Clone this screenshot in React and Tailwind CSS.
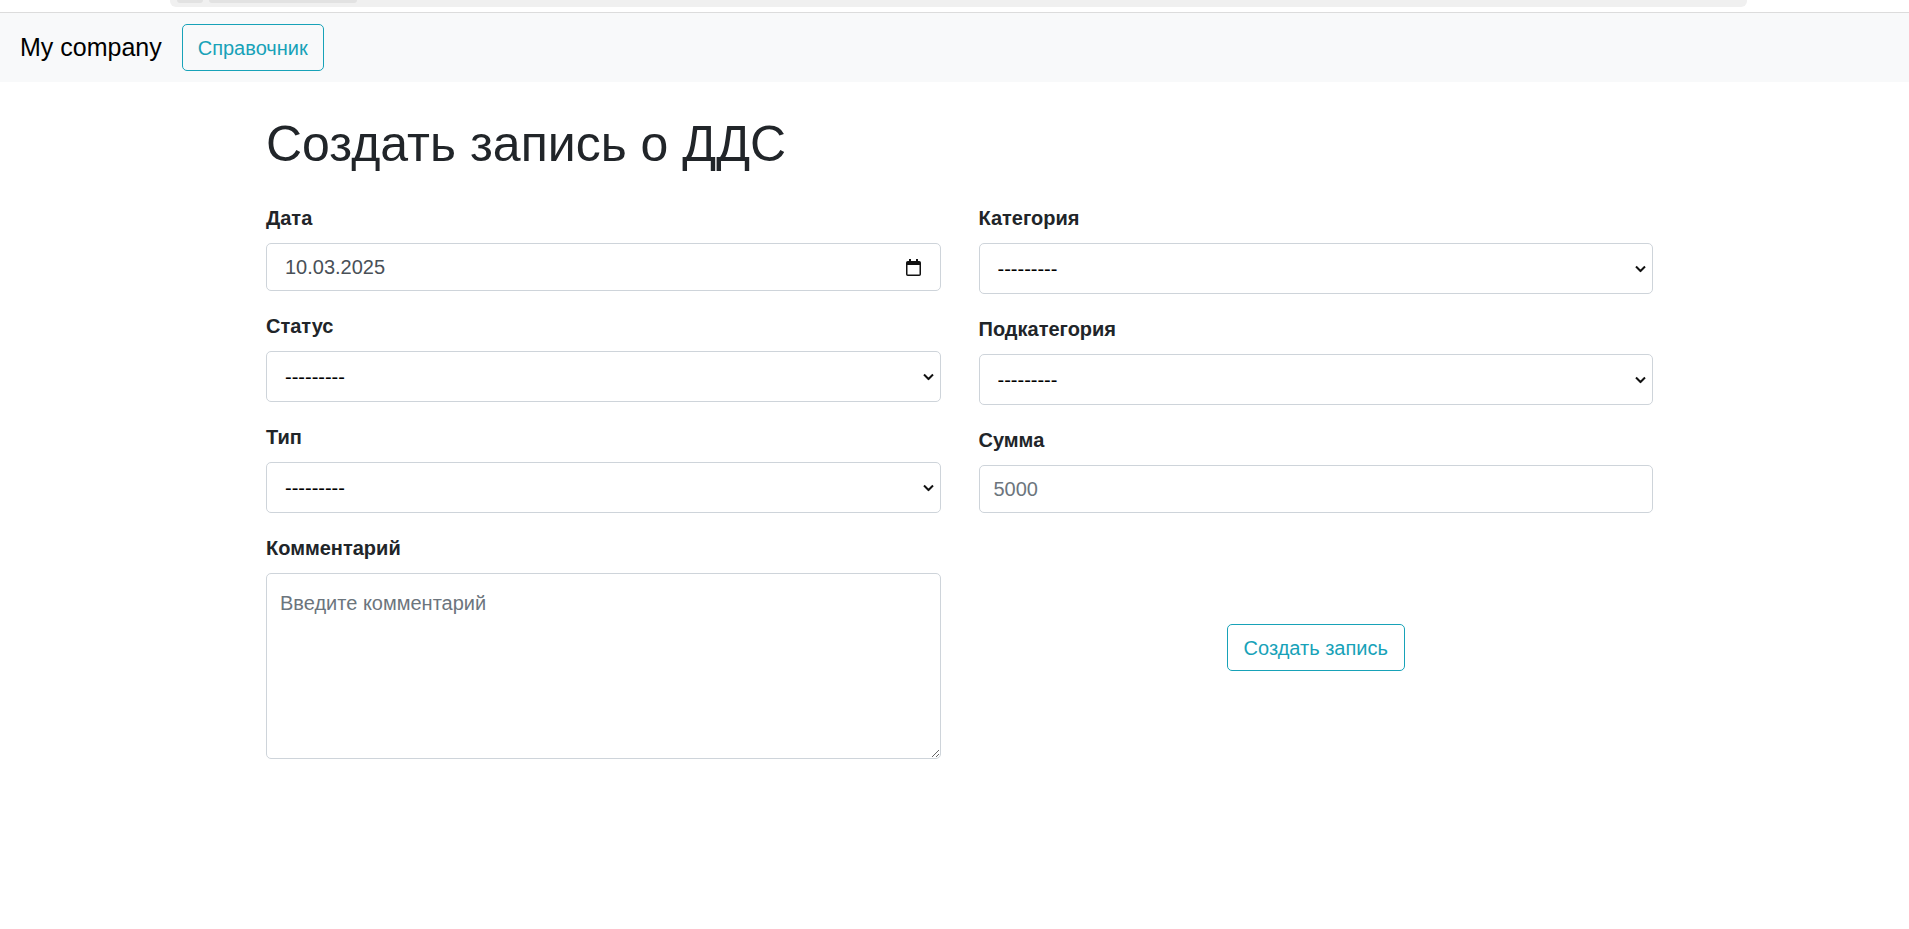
import React from "react";

const font = { fontFamily: '"Liberation Sans", Arial, sans-serif' };

function Chevron() {
  return (
    <svg width="11" height="7" viewBox="0 0 11 7" className="absolute right-[7px] top-1/2 -translate-y-1/2 pointer-events-none">
      <polyline points="1,1 5.5,5.5 10,1" fill="none" stroke="#111" strokeWidth="2" />
    </svg>
  );
}

function CalendarIcon() {
  return (
    <svg width="15" height="17" viewBox="0 0 15 17">
      <rect x="3" y="0" width="2" height="3" fill="#111" />
      <rect x="10" y="0" width="2" height="3" fill="#111" />
      <rect x="0.75" y="2.75" width="13.5" height="13.5" rx="1" fill="none" stroke="#111" strokeWidth="1.5" />
      <rect x="1" y="3" width="13" height="3" fill="#111" />
    </svg>
  );
}

function Field({ label, children }) {
  return (
    <div className="mb-[20px]">
      <label className="block mb-[10px] text-[20px] leading-[30px] font-bold text-[#212529]">{label}</label>
      {children}
    </div>
  );
}

function Select() {
  return (
    <div className="relative">
      <select className="w-full h-[51px] appearance-none bg-white border border-[#ced4da] rounded-[5px] pl-[18px] pr-8 text-[20px] text-black outline-none">
        <option>---------</option>
      </select>
      <Chevron />
    </div>
  );
}

export default function App() {
  return (
    <div className="min-h-screen bg-white" style={font}>
      {/* browser strip remnant */}
      <div className="h-[13px] border-b border-[#dcdcdc] relative">
        <div className="absolute left-[170px] top-0 w-[1577px] h-[7px] bg-[#f0f0f0] rounded-br-[6px] rounded-bl-[6px]">
          <div className="absolute left-[7px] top-0 w-[26px] h-[3px] bg-[#e2e2e2] rounded-b-[3px]" />
          <div className="absolute left-[39px] top-0 w-[148px] h-[3px] bg-[#e2e2e2] rounded-b-[3px]" />
        </div>
      </div>

      {/* navbar */}
      <nav className="h-[69px] bg-[#f8f9fa] flex items-center pl-[20px]">
        <span className="text-[25px] text-[#000] mr-[20px] leading-none">My company</span>
        <button className="h-[47px] px-[15px] border border-[#17a2b8] rounded-[5px] text-[#17a2b8] text-[20px]">
          Справочник
        </button>
      </nav>

      <div className="pl-[266px]">
        <div className="w-[1387px]">
          <h1 className="mt-[32px] mb-[29px] text-[50px] leading-[60px] text-[#212529] font-normal">
            Создать запись о ДДС
          </h1>

          <div className="grid grid-cols-2 gap-x-[38px]">
            <div>
              <Field label="Дата">
                <div className="h-[48px] border border-[#ced4da] rounded-[5px] flex items-center justify-between pl-[18px] pr-[19px]">
                  <span className="text-[20px] text-[#495057]">10.03.2025</span>
                  <CalendarIcon />
                </div>
              </Field>
              <Field label="Статус">
                <Select />
              </Field>
              <Field label="Тип">
                <Select />
              </Field>
              <Field label="Комментарий">
                <textarea
                  placeholder="Введите комментарий"
                  className="block w-full h-[186px] border border-[#ced4da] rounded-[5px] px-[13px] pt-[14px] pb-[8px] text-[20px] leading-[30px] placeholder:text-[#6c757d] outline-none"
                />
              </Field>
            </div>

            <div>
              <Field label="Категория">
                <Select />
              </Field>
              <Field label="Подкатегория">
                <Select />
              </Field>
              <Field label="Сумма">
                <input
                  placeholder="5000"
                  className="block w-full h-[48px] border border-[#ced4da] rounded-[5px] px-[14px] text-[20px] placeholder:text-[#6c757d] outline-none"
                />
              </Field>
              <div className="flex justify-center mt-[111px]">
                <button className="h-[47px] px-[16px] border border-[#17a2b8] rounded-[5px] text-[#17a2b8] text-[20px]">
                  Создать запись
                </button>
              </div>
            </div>
          </div>
        </div>
      </div>
    </div>
  );
}
